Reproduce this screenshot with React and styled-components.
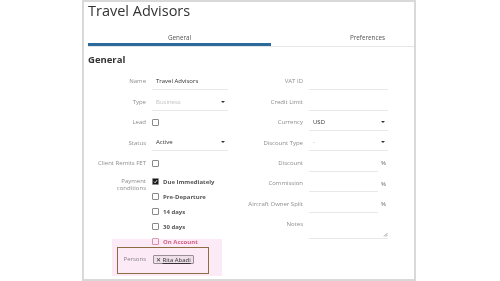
import React from "react";
import styled, { createGlobalStyle } from "styled-components";

const Global = createGlobalStyle`
  html, body {
    margin: 0;
    padding: 0;
    background: #ffffff;
    overflow: hidden;
  }
  body {
    font-family: "Open Sans", "DejaVu Sans", sans-serif;
    color: #333;
  }
`;

const Page = styled.div`
  width: 500px;
  height: 281px;
  position: relative;
`;

const Panel = styled.div`
  position: relative;
  box-sizing: border-box;
  margin-left: 82px;
  width: 334px;
  height: 281px;
  border: 2px solid #d9d9d9;
  padding-left: 4px;
  overflow: hidden;
`;

const Title = styled.h1`
  margin: 0;
  font-size: 14.5px;
  line-height: 18px;
  font-weight: 400;
  color: #333;
`;

const Tabs = styled.div`
  display: flex;
  width: 380px;
  border-bottom: 1px solid #e6e6e6;
`;

const Tab = styled.div`
  flex: 0 0 183px;
  box-sizing: border-box;
  text-align: center;
  padding-top: 13px;
  margin-left: ${(p) => (p.active ? 0 : 5)}px;
  font-size: 6.3px;
  line-height: 10px;
  color: #555;
  border-bottom: 3px solid ${(p) => (p.active ? "#2b6a9b" : "transparent")};
`;

const Heading = styled.h2`
  margin: 7px 0 0;
  font-size: 9.5px;
  line-height: 12px;
  font-weight: 700;
  color: #333;
`;

const Form = styled.div`
  display: flex;
  align-items: flex-start;
  gap: 10px;
  margin-top: 5.5px;
`;

const Column = styled.div`
  display: grid;
  grid-template-columns: ${(p) => p.label}px ${(p) => p.input}px;
  align-content: start;
  column-gap: 6px;
  align-items: start;
`;

const Label = styled.div`
  height: ${(p) => (p.tall ? "auto" : "20.4px")};
  display: flex;
  align-items: ${(p) => (p.top ? "flex-start" : "center")};
  justify-content: flex-end;
  text-align: right;
  padding-top: ${(p) => p.pt || 0}px;
  font-size: 6px;
  line-height: 6.6px;
  color: #8c8c8c;
  white-space: nowrap;
`;

const Cell = styled.div`
  height: 20.4px;
  display: flex;
  align-items: center;
  gap: 3px;
`;

const Input = styled.div`
  box-sizing: border-box;
  flex: 1;
  height: 17px;
  padding: 0 4px;
  display: flex;
  align-items: center;
  justify-content: space-between;
  border-bottom: 1px solid #e8e8e8;
  font-size: 6px;
  color: ${(p) => (p.placeholder ? "#c2c2c2" : "#333")};
`;

const Arrow = styled.span`
  width: 0;
  height: 0;
  margin-right: -1px;
  border-left: 2.2px solid transparent;
  border-right: 2.2px solid transparent;
  border-top: 2.6px solid #333;
`;

const Percent = styled.span`
  font-size: 6px;
  color: #666;
  width: 7px;
`;

const Box = styled.span`
  box-sizing: border-box;
  display: inline-flex;
  align-items: center;
  justify-content: center;
  width: 7px;
  height: 7px;
  border: 0.8px solid ${(p) => (p.pink ? "#e29ab0" : "#8a8a8a")};
  border-radius: 1px;
  background: ${(p) => (p.checked ? "#1a1a1a" : "#fff")};
  flex: none;
`;

const Options = styled.div`
  padding-top: 1px;
  display: flex;
  flex-direction: column;
`;

const Option = styled.div`
  height: 15px;
  display: flex;
  align-items: center;
  gap: 4px;
  font-size: 6px;
  font-weight: 700;
  color: ${(p) => (p.pink ? "#d9668a" : "#555")};
`;

const TextArea = styled.div`
  position: relative;
  box-sizing: border-box;
  margin-top: 1.7px;
  width: 79px;
  height: 23px;
  border-bottom: 1px solid #e8e8e8;
`;

const Grip = styled.svg`
  position: absolute;
  right: 0;
  bottom: 1px;
`;

const Tag = styled.span`
  display: inline-flex;
  align-items: center;
  gap: 1.5px;
  height: 9px;
  padding: 0 2px;
  box-sizing: border-box;
  border: 0.8px solid #9a9a9a;
  border-radius: 1px;
  background: #f2f2f2;
  font-size: 6px;
  color: #333;
  margin-left: 1px;
`;

const TagName = styled.span`
  text-decoration: underline;
`;

const Highlight = styled.div`
  position: absolute;
  left: 112px;
  top: 239px;
  width: 110px;
  height: 37px;
  background: #fcebf6;
  mix-blend-mode: multiply;
  pointer-events: none;
`;

const Callout = styled.div`
  position: absolute;
  left: 117px;
  top: 247px;
  width: 92px;
  height: 27px;
  box-sizing: border-box;
  border: 1.6px solid #8d6c42;
  pointer-events: none;
`;

const Check = () => (
  <svg width="5" height="5" viewBox="0 0 10 10">
    <path d="M2 5.2 L4.2 7.4 L8 2.6" stroke="#fff" strokeWidth="1.8" fill="none" />
  </svg>
);

const Field = ({ label, children }) => (
  <>
    <Label>{label}</Label>
    <Cell>{children}</Cell>
  </>
);

const payments = [
  { text: "Due Immediately", checked: true },
  { text: "Pre-Departure" },
  { text: "14 days" },
  { text: "30 days" },
  { text: "On Account", pink: true },
];

export default function App() {
  return (
    <Page>
      <Global />
      <Panel>
        <Title>Travel Advisors</Title>
        <Tabs>
          <Tab active>General</Tab>
          <Tab>Preferences</Tab>
        </Tabs>
        <Heading>General</Heading>
        <Form>
          <Column label={58} input={76}>
            <Field label="Name">
              <Input>Travel Advisors</Input>
            </Field>
            <Field label="Type">
              <Input placeholder="1">
                Business
                <Arrow />
              </Input>
            </Field>
            <Field label="Lead">
              <Box />
            </Field>
            <Field label="Status">
              <Input>
                Active
                <Arrow />
              </Input>
            </Field>
            <Field label="Client Remits FET">
              <Box />
            </Field>
            <Label tall top pt={4.5}>
              Payment
              <br />
              conditions
            </Label>
            <Options>
              {payments.map((p) => (
                <Option key={p.text} pink={p.pink}>
                  <Box checked={p.checked} pink={p.pink}>
                    {p.checked && <Check />}
                  </Box>
                  {p.text}
                </Option>
              ))}
            </Options>
            <Field label="Persons">
              <Tag>
                <span>✕</span>
                <TagName>Rita Abadi</TagName>
              </Tag>
            </Field>
          </Column>
          <Column label={65} input={79}>
            <Field label="VAT ID">
              <Input />
            </Field>
            <Field label="Credit Limit">
              <Input />
            </Field>
            <Field label="Currency">
              <Input>
                USD
                <Arrow />
              </Input>
            </Field>
            <Field label="Discount Type">
              <Input placeholder="1">
                -
                <Arrow />
              </Input>
            </Field>
            <Field label="Discount">
              <Input />
              <Percent>%</Percent>
            </Field>
            <Field label="Commission">
              <Input />
              <Percent>%</Percent>
            </Field>
            <Field label="Aircraft Owner Split">
              <Input />
              <Percent>%</Percent>
            </Field>
            <Label tall top pt={7}>
              Notes
            </Label>
            <TextArea>
              <Grip width="5" height="5" viewBox="0 0 10 10">
                <path d="M9 2 L2 9 M9 6 L6 9" stroke="#777" strokeWidth="1.4" />
              </Grip>
            </TextArea>
          </Column>
        </Form>
      </Panel>
      <Highlight />
      <Callout />
    </Page>
  );
}
